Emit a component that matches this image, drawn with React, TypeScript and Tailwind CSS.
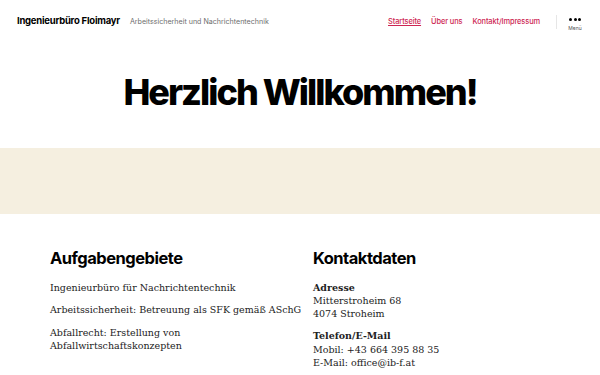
const sans = "font-['Inter',sans-serif]";
const serif = "font-['DejaVu_Serif',serif]";

function Header() {
  return (
    <header className={`flex items-center justify-between h-[41px] pt-[2px] pl-[17px] pr-[18px] ${sans}`}>
      <div className="flex items-baseline gap-[10px]">
        <span className="text-[9.5px] font-bold tracking-[-0.025em] text-black">Ingenieurbüro Floimayr</span>
        <span className="text-[7.1px] text-[#6d6d6d]">Arbeitssicherheit und Nachrichtentechnik</span>
      </div>
      <div className="flex items-center">
        <nav className="flex items-center gap-[10px] text-[7.45px] font-medium text-[#cd2653] tracking-[-0.015em]">
          <a className="underline">Startseite</a>
          <a>Über uns</a>
          <a>Kontakt/Impressum</a>
        </nav>
        <div className="w-px h-[14px] bg-[#e6e6e6] ml-[16px] mr-[11px]" />
        <div className="flex flex-col items-center w-[14px] pt-[8px]">
          <div className="flex gap-[1.5px]">
            <span className="w-[3px] h-[3px] rounded-full bg-black" />
            <span className="w-[3px] h-[3px] rounded-full bg-black" />
            <span className="w-[3px] h-[3px] rounded-full bg-black" />
          </div>
          <span className="text-[5px] text-[#555] mt-[4px]">Menü</span>
        </div>
      </div>
    </header>
  );
}

export default function App() {
  return (
    <div className="w-[600px] h-[375px] overflow-hidden bg-white">
      <Header />
      <div className="flex justify-center pt-[33px] h-[107px]">
        <h1 className={`${sans} text-[36px] leading-none font-extrabold tracking-[-0.055em] text-black`}>
          Herzlich Willkommen!
        </h1>
      </div>
      <div className="h-[66px] bg-[#f5efe0]" />
      <div className="grid grid-cols-[263px_1fr] pl-[50px] pt-[36px]">
        <div>
          <h2 className={`${sans} text-[16.5px] font-bold tracking-[-0.03em] leading-none text-black`}>Aufgabengebiete</h2>
          <div className={`${serif} text-[9.5px] leading-[13.5px] text-[#222] mt-[14px] flex flex-col gap-[9px]`}>
            <p>Ingenieurbüro für Nachrichtentechnik</p>
            <p>Arbeitssicherheit: Betreuung als SFK gemäß ASchG</p>
            <p>Abfallrecht: Erstellung von<br />Abfallwirtschaftskonzepten</p>
          </div>
        </div>
        <div>
          <h2 className={`${sans} text-[16.5px] font-bold tracking-[-0.03em] leading-none text-black`}>Kontaktdaten</h2>
          <div className={`${serif} text-[9.5px] leading-[13.3px] text-[#222] mt-[14px] flex flex-col gap-[9px]`}>
            <p><strong>Adresse</strong><br />Mitterstroheim 68<br />4074 Stroheim</p>
            <p><strong>Telefon/E-Mail</strong><br />Mobil: +43 664 395 88 35<br />E-Mail: office@ib-f.at</p>
          </div>
        </div>
      </div>
    </div>
  );
}
